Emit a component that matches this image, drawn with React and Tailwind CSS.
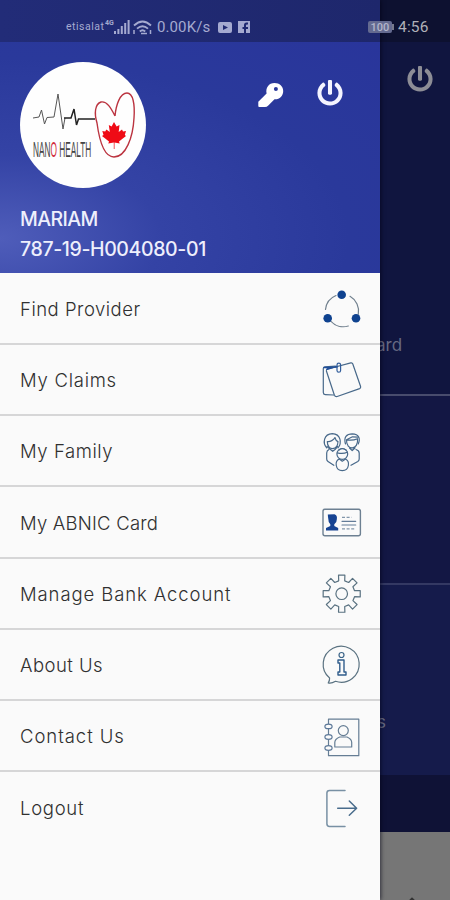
import { FaPowerOff } from "react-icons/fa";

const gearPath = () => {
  const cx = 20.7;
  const cy = 19.7;
  const points = [];
  for (let i = 0; i < 8; i++) {
    const base = (i * Math.PI) / 4;
    [
      [-0.23, 13.2],
      [-0.17, 18.8],
      [0.17, 18.8],
      [0.23, 13.2],
    ].forEach(([offset, r]) => {
      points.push(`${(cx + r * Math.sin(base + offset)).toFixed(2)} ${(cy - r * Math.cos(base + offset)).toFixed(2)}`);
    });
  }
  return `M${points.join("L")}Z`;
};

const Icon = ({ children }) => (
  <svg
    viewBox="0 0 41 41"
    className="h-[41px] w-[41px] shrink-0 overflow-visible"
    fill="none"
    stroke="#48698a"
    strokeWidth="1.2"
    strokeLinecap="round"
    strokeLinejoin="round"
  >
    {children}
  </svg>
);

const ProviderIcon = () => (
  <Icon>
    <path d="M4.5 20.5A17 17 0 0 1 15 6.5M29 7.3A17 17 0 0 1 37.3 25.3M9.7 32.2A17 17 0 0 0 27.3 37" stroke="#71808e" />
    <g fill="#0f428f" stroke="none">
      <circle cx="20.7" cy="5.7" r="4.3" />
      <circle cx="6.7" cy="29.3" r="4.3" />
      <circle cx="35" cy="29.3" r="4.3" />
    </g>
  </Icon>
);

const ClaimsIcon = () => (
  <Icon>
    <path d="M14.5 6.2L4 6.8Q2.3 7 2.3 8.6V32.6Q2.3 34.5 4.2 34.6L12.5 35" />
    <path d="M6.8 9L29.8 2.9Q31.3 2.5 31.8 4L39.6 26.5Q40 28 38.6 28.6L16.2 36.5Q14.2 37 13.4 35.2L5.4 11Q5 9.5 6.8 9Z" />
    <path d="M3 7.5L16 7M6 9.2L16 6.4" stroke="#204f9a" strokeWidth="1.5" />
    <rect x="16" y="3.2" width="3.6" height="9" rx="1.8" stroke="#315d9b" />
  </Icon>
);

const FamilyIcon = () => (
  <Icon>
    <path d="M5.7 15.8C1.5 11 2.5 2 11.3 1.6C20 2 21 11 17 15.8" />
    <path d="M6.3 9.5C9 10 13 8 14 5.6C14.5 8 15.6 9 17 9.6C16.8 19 6.2 19 6.3 9.5Z" />
    <path d="M6 14.5L9.5 17.5L11.7 19.3L14 17.5L16.5 14.5M24.5 12C22.5 5 25.5 1.8 31.3 1.8C38 2 39.6 6.5 37.2 12" />
    <path d="M25.5 7.8C29 8.5 33 8.3 36.5 6.7C38 18.5 25 19 25.5 7.8ZM25.5 7.8L31.5 4.8L37 5.2M28.5 16L31.2 18.5L34 16" />
    <path d="M8 17.5Q5.7 18.5 5.7 21V27Q5.7 28.5 7 29.4L12.8 33.3M35 17.5Q38.2 18.5 38.2 21V27Q38.2 28.5 36.8 29.4L30 33.3" />
    <circle cx="21.3" cy="22" r="5.4" />
    <path d="M16.3 20.8Q22 22.2 26.3 20.2M18 18Q21 15 25 18" />
    <path d="M18.3 27C13.5 29 14 38.5 21.3 38.7C28.7 38.5 29 29 24.5 27L21.3 29.2Z" />
  </Icon>
);

const CardIcon = () => (
  <Icon>
    <rect x="2" y="6.3" width="37.4" height="26.5" rx="2" stroke="#6d8092" strokeWidth="1.4" />
    <path d="M7 14L6.8 11.5L13.5 11.2Q16.6 12 15.8 16.5Q15.8 20 13.3 21.3V23L17.2 25V27.6H5V25L9.3 23V21.3Q7.2 19.8 7.4 16.5Z" fill="#164392" stroke="none" />
    <path d="M21 14.3H30.5M21 25.8H33.5" stroke="#8296aa" strokeDasharray="3 1.6" strokeLinecap="butt" />
    <path d="M21 18.3H34.7M21 22H34.7" stroke="#637c98" />
  </Icon>
);

const GearIcon = () => (
  <Icon>
    <path d={gearPath()} stroke="#5a7281" />
    <circle cx="20.7" cy="19.7" r="5.8" stroke="#5a7281" />
  </Icon>
);

const InfoIcon = () => (
  <Icon>
    <path d="M8.6 33A18 18 0 1 1 14.5 36.3Q10.5 38.8 7.2 38Q8.8 35.5 8.6 33Z" stroke="#5a7281" />
    <circle cx="20.5" cy="10" r="2.5" stroke="#3b6488" />
    <path d="M17 15H23V27H25V30H17V27H18.8V18H17Z" stroke="#315d8c" strokeWidth="1.4" />
  </Icon>
);

const ContactIcon = () => (
  <Icon>
    <path d="M7.5 6.5V2.2H37.8V38.7H7.5V34M7.5 12.3V17M7.5 23V28" stroke="#657d94" />
    <g stroke="#5c7898">
      <ellipse cx="7.5" cy="9.4" rx="3.6" ry="2.3" />
      <ellipse cx="7.5" cy="20" rx="3.6" ry="2.3" />
      <ellipse cx="7.5" cy="31" rx="3.6" ry="2.3" />
    </g>
    <circle cx="22.3" cy="13.6" r="5" stroke="#657d94" />
    <path d="M18.7 20H26Q30.7 22 30.7 25.5V30H13.8V25.5Q13.8 22 18.7 20Z" stroke="#657d94" />
  </Icon>
);

const LogoutIcon = () => (
  <Icon>
    <path d="M24 2.4H8.5Q5.9 2.4 5.9 5V35.8Q5.9 38.5 8.5 38.5H24" stroke="#7890a4" strokeWidth="1.5" />
    <path d="M16.7 20.3H35.5M28.3 13L35.6 20.3L28.3 27.3" stroke="#496c8c" strokeWidth="1.5" />
  </Icon>
);

const KeyIcon = () => (
  <svg viewBox="0 0 26 26" className="mt-[20px] ml-[112px] h-[26px] w-[26px] shrink-0" fill="#fff">
    <path
      fillRule="evenodd"
      d="M16.5 1C21.6 1 25.2 4.5 25.2 9C25.2 14 21.5 17.6 16.5 17.3L10.3 23.5Q8.8 25 7 25H1.2Q.3 25 .3 24V19.8L8.6 11.5C7.3 6 10.8 1 16.5 1ZM17.9 5A2 2 0 1 0 17.9 9A2 2 0 1 0 17.9 5Z"
    />
  </svg>
);

const menuItems = [
  { label: "Find Provider", icon: ProviderIcon, tracking: "tracking-[0.5px]" },
  { label: "My Claims", icon: ClaimsIcon, tracking: "tracking-[0.75px]" },
  { label: "My Family", icon: FamilyIcon, tracking: "tracking-[0.58px]" },
  { label: "My ABNIC Card", icon: CardIcon, tracking: "tracking-[0.22px]" },
  { label: "Manage Bank Account", icon: GearIcon, tracking: "tracking-[0.9px]" },
  { label: "About Us", icon: InfoIcon, tracking: "tracking-[0.45px]" },
  { label: "Contact Us", icon: ContactIcon, tracking: "tracking-[0.95px]" },
  { label: "Logout", icon: LogoutIcon, tracking: "tracking-[0.7px]" },
];

const Logo = () => (
  <svg viewBox="0 0 126 126" className="h-[126px] w-[126px] shrink-0 rounded-full bg-[#fefefe]" fill="none">
    <path d="M13 56L19 55L21.5 48L24.5 62L27 55.5L34 55L38 32L43 67L45 56" stroke="#555" strokeWidth="1" />
    <path d="M44 56H51L54 47L56.5 63L58.5 57H75" stroke="#222" strokeWidth="1.5" />
    <path
      d="M95 54C91 46 87 39 81 40C75 42 74 51 77 61C79 76 83 95 94 95C106 95 113 75 114 56C115 42 113 31 107 31C100 31 96 43 95 54"
      stroke="#bb3440"
      strokeWidth="1.4"
    />
    <path
      d="M94 60L96.6 64.5L99.5 63L98.7 70L102 67.5L103 69.5L106 69L104.8 73L106 74L99 79.5L99.7 81.5L94.5 80.5V87H93.8V80.5L88.3 81.5L89 79.5L82 74L83.5 73L82.3 69L85.2 69.5L86.4 67.5L89.8 70L88.8 63L91.6 64.5Z"
      fill="#ef0b16"
    />
    <text transform="translate(13 94.5) scale(0.385 1)" fontFamily="Liberation Sans" fontSize="21.5" fill="#444">
      NAN<tspan fill="#d12c3b">O</tspan> HEALTH
    </text>
  </svg>
);

const StatusBar = () => (
  <div className="absolute inset-x-0 top-0 z-20 flex h-[42px] items-center pt-3 pr-[21px] pl-[66px] font-['Roboto',sans-serif] leading-none text-[#a5aad0]">
    <span className="w-[39px] text-[10.5px] tracking-[0.5px]">etisalat</span>
    <span className="mb-2 w-[9px] text-[7px] font-bold">4G</span>
    <svg viewBox="0 0 16 14" className="h-[14px] w-4" fill="currentColor">
      <path d="M0 11h2v3H0zM3.4 9h2v5h-2zM6.8 6h2v8h-2zM10.2 3h2v11h-2zM13.6 0h2v14h-2z" />
    </svg>
    <svg viewBox="0 0 20 15" className="ml-[3px] h-[15px] w-5" fill="none" stroke="currentColor" strokeWidth="1.8">
      <path d="M1 5.5Q9.5-2.5 18 5.5M4 8.7Q9.5 3.7 15 8.7M6.8 11.5Q9.5 9 12.2 11.5" />
      <path d="M1 14V10M17.5 10V14M8 13.5H14" strokeWidth="1.5" />
    </svg>
    <span className="ml-1 w-[61px] text-[15px] tracking-[0.1px]">0.00K/s</span>
    <svg viewBox="0 0 14 11" className="h-[11px] w-[14px]" fill="currentColor">
      <path fillRule="evenodd" d="M2 0h10q2 0 2 2v7q0 2-2 2H2q-2 0-2-2V2q0-2 2-2zM5 3v5l5-2.5z" />
    </svg>
    <svg viewBox="0 0 12 12" className="ml-[6px] h-3 w-3" fill="currentColor">
      <path fillRule="evenodd" d="M0 0h12v12H8V8h2V6H8V4.5q0-1 1-1h1v-2H8.5Q6 1.5 6 4v2H4.5v2H6v4H0z" />
    </svg>
    <div className="ml-auto flex items-center text-[#9fa0ad]">
      <span className="grid h-[12px] w-6 place-items-center rounded-[2px] bg-[#646a90] text-[11px] font-medium text-[#b3b6cb]">100</span>
      <span className="h-[6px] w-[2px] bg-[#777a8c]" />
      <span className="ml-1 w-[31px] pt-px text-[15.5px] tracking-[0.2px] text-[#b0b0b8]">4:56</span>
    </div>
  </div>
);

// home screen, dimmed under the open drawer
const Backdrop = () => (
  <div className="flex h-full flex-col bg-[#131848] pl-[380px] text-[17px] text-[#666982]">
    <div className="h-[42px] bg-[#0d1130]" />
    <div className="flex h-[354px] flex-col border-b-2 border-[#484c6d] bg-[#10153f]">
      <FaPowerOff className="mt-[24px] ml-[27px] text-[26px] text-[#8d8d96]" />
      <span className="mt-[239px] -ml-[4px] leading-7">ard</span>
    </div>
    <div className="h-[189px] border-b-2 border-[#343963] bg-[#131744]" />
    <div className="h-[190px] bg-[#151b4b] pt-[123px] leading-7">
      <span className="-ml-[3px]">s</span>
    </div>
    <div className="h-[57px] bg-[#0f1236]" />
    <div className="relative grow overflow-hidden bg-[#767676]">
      <span className="absolute -bottom-[2px] left-[30px] h-1 w-1 rotate-45 bg-[#333]" />
    </div>
  </div>
);

const Drawer = () => (
  <aside className="absolute inset-y-0 left-0 z-10 flex w-[380px] flex-col bg-[#fafafa] shadow-[1px_0_4px_rgba(0,0,20,0.6)]">
    <div className="h-[42px] shrink-0 bg-linear-to-r from-[#222c78] to-[#1e276c]" />
    <header className="flex h-[231px] shrink-0 flex-col bg-[radial-gradient(ellipse_at_0%_85%,#4f5dba_0%,#3443a5_30%,#2a399b_65%,#29359b_100%)] pl-5 text-[#eeeffc]">
      <div className="flex pt-5">
        <Logo />
        <KeyIcon />
        <FaPowerOff className="mt-[18px] ml-[33px] text-[26px] text-[#f4f4ff]" />
      </div>
      <p className="mt-[16px] text-[19.5px] leading-[30px] font-medium tracking-[-0.6px]">MARIAM</p>
      <p className="text-[19.5px] leading-[30px] font-medium tracking-[-0.38px]">787-19-H004080-01</p>
    </header>
    <nav className="pt-[0.5px]">
      {menuItems.map(({ label, icon: ItemIcon, tracking }) => (
        <a
          key={label}
          className="flex h-[71.25px] items-center justify-between border-b-2 border-[#d6d6d7] pt-[3px] pr-[18px] pl-5 text-[18.5px] font-light text-[#303030] last:border-transparent"
        >
          <span className={tracking}>{label}</span>
          <ItemIcon />
        </a>
      ))}
    </nav>
  </aside>
);

const App = () => {
  return (
    <div className="relative h-[900px] w-[450px] overflow-hidden font-['Inter',sans-serif]">
      <Backdrop />
      <Drawer />
      <StatusBar />
    </div>
  );
};

export default App;
